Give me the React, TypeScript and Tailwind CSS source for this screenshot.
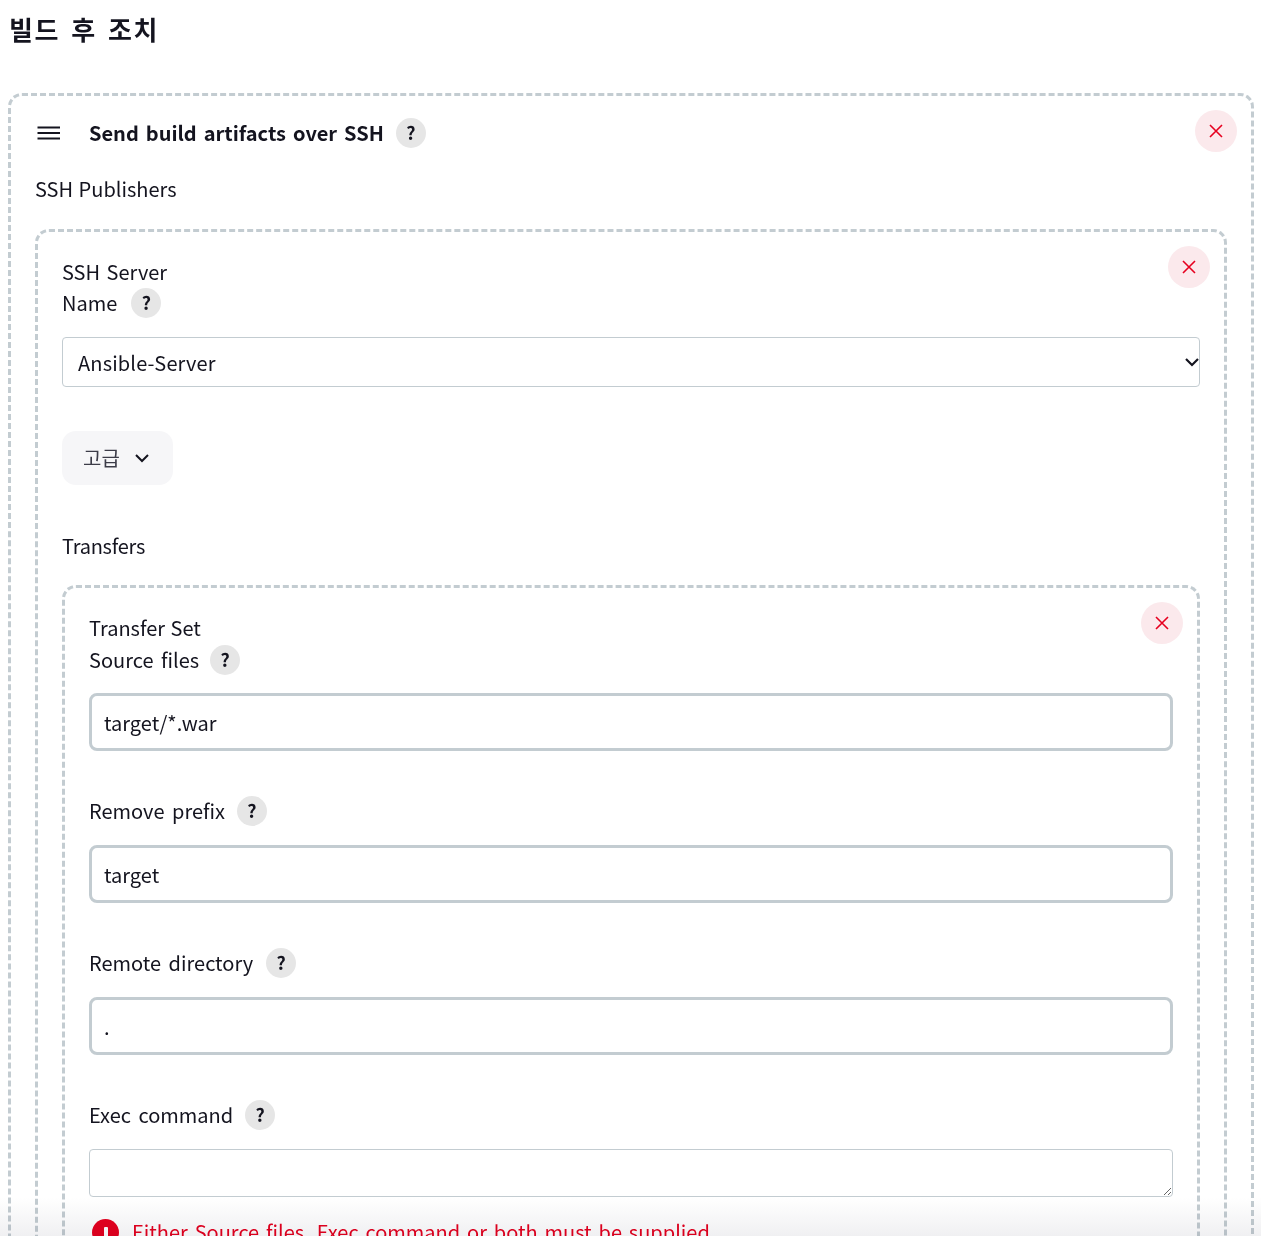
import React from 'react';

const fontStack = "font-['Noto_Sans_CJK_KR','Noto_Sans',sans-serif]";

const HelpButton = () => (
  <span className="inline-flex h-[30px] w-[30px] shrink-0 items-center justify-center rounded-full bg-[#e6e6e6] pb-[3px] text-[18px] font-bold leading-none text-[#14141f]">
    ?
  </span>
);

const CloseButton = () => (
  <button className="absolute right-[14px] top-[14px] flex h-[42px] w-[42px] items-center justify-center rounded-full bg-[#fbe9ec]">
    <svg width="14" height="14" viewBox="0 0 14 14" fill="none" stroke="#e6001f" strokeWidth="1.6">
      <path d="M1 1 L13 13 M13 1 L1 13" />
    </svg>
  </button>
);

const FieldLabel = ({ text, className = 'gap-3' }: { text: string; className?: string }) => (
  <div className={`flex h-[30px] items-center ${className}`}>
    <span>{text}</span>
    <HelpButton />
  </div>
);

const TextField = ({ value }: { value: string }) => (
  <input
    type="text"
    defaultValue={value}
    className="block h-[58px] w-full rounded-[8px] border-[3px] border-[#c3ccd1] bg-white px-3 text-[#14141f] outline-none"
  />
);

export default function App() {
  return (
    <div className={`relative h-[1238px] overflow-hidden bg-white text-[20px] leading-[30px] text-[#14141f] [word-spacing:3px] ${fontStack}`}>
      <h2 className="pl-[9px] pt-[8px] text-[26px] font-bold leading-[42px] tracking-[1.5px] [word-spacing:4px]">빌드 후 조치</h2>

      <div className="relative ml-[8px] mr-[7px] mt-[43px] rounded-[14px] border-[3px] border-dashed border-[#c3ccd1] pl-6 pr-6 pt-[22px]">
        <CloseButton />
        <div className="flex h-[30px] items-center">
          <svg width="24" height="14" viewBox="0 0 24 14" stroke="#14141f" strokeWidth="1.8" className="mb-px ml-[2px] mr-[28px] shrink-0">
            <path d="M0.5 1.5 H23 M0.5 7 H23 M0.5 12.5 H23" />
          </svg>
          <span className="mr-[12px] font-bold [word-spacing:2.5px]">Send build artifacts over SSH</span>
          <HelpButton />
        </div>
        <div className="mt-[26px] [word-spacing:1px]">SSH Publishers</div>

        <div className="relative mt-[25px] rounded-[14px] border-[3px] border-dashed border-[#c3ccd1] px-6 pt-[25px]">
          <CloseButton />
          <div className="[word-spacing:2px]">SSH Server</div>
          <FieldLabel text="Name" className="mt-px gap-[14px]" />
          <div className="relative mt-[19px]">
            <select
              defaultValue="Ansible-Server"
              className="block h-[50px] w-full appearance-none rounded-[4px] border border-[#c3ccd1] bg-white pl-[15px] pt-[2px] tracking-[0.15px] outline-none"
            >
              <option>Ansible-Server</option>
            </select>
            <svg width="14" height="9" viewBox="0 0 14 9" fill="none" stroke="#14141f" strokeWidth="2.2" className="pointer-events-none absolute right-px top-[21px]">
              <path d="M1 1 L7 7 L13 1" />
            </svg>
          </div>

          <button className="mt-11 flex h-[54px] w-[111px] items-center justify-center gap-[14px] rounded-[14px] bg-[#f6f6f8] pr-[2px] text-[#3c3c48]">
            <span>고급</span>
            <svg width="16" height="16" viewBox="0 0 16 16" fill="none" stroke="#14141f" strokeWidth="2">
              <path d="M2 5 L8 11 L14 5" />
            </svg>
          </button>

          <div className="mt-[46px] tracking-[-0.25px]">Transfers</div>

          <div className="relative mt-[24px] rounded-[14px] border-[3px] border-dashed border-[#c3ccd1] px-6 pt-[25px]">
            <CloseButton />
            <div className="[word-spacing:1px]">Transfer Set</div>
            <FieldLabel text="Source files" className="mt-[2px] gap-[11px]" />
            <div className="mt-[18px]">
              <TextField value="target/*.war" />
            </div>
            <FieldLabel text="Remove prefix" className="mt-[45px] gap-3" />
            <div className="mt-[19px]">
              <TextField value="target" />
            </div>
            <FieldLabel text="Remote directory" className="mt-[45px] gap-[13px]" />
            <div className="mt-[19px]">
              <TextField value="." />
            </div>
            <FieldLabel text="Exec command" className="mt-[45px] gap-3" />
            <textarea className="mt-[19px] block h-[48px] w-full rounded-[4px] border border-[#c3ccd1] bg-white outline-none" />
            <div className="mt-[20px] flex items-center gap-[13px] pl-[3px] text-[#e6001f]">
              <span className="flex h-[27px] w-[27px] shrink-0 items-center justify-center rounded-full bg-[#e6001f]">
                <span className="h-[11px] w-[4px] rounded-[1px] bg-white" />
              </span>
              <span className="[word-spacing:2.4px]">Either Source files, Exec command or both must be supplied</span>
            </div>
            <div className="h-[200px]" />
          </div>
        </div>
      </div>

      <div className="absolute bottom-[2px] left-0 right-0 h-[38px] bg-gradient-to-b from-white to-[#f0f0f2] mix-blend-multiply" />
      <div className="absolute bottom-0 left-0 right-0 h-[2px] bg-white" />
    </div>
  );
}
